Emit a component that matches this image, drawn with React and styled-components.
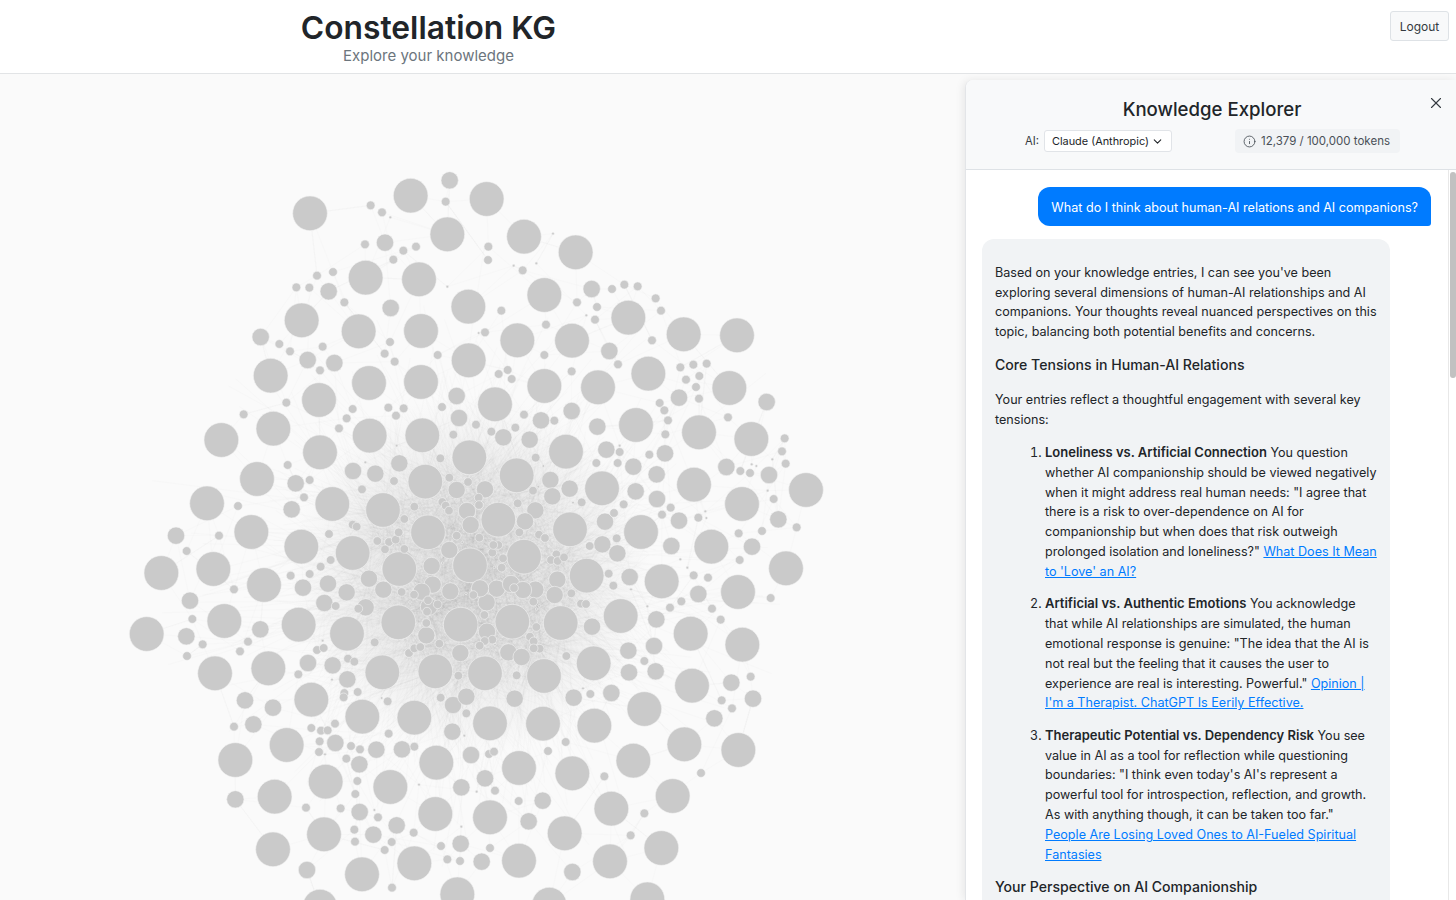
import React from "react";
import styled, { createGlobalStyle } from "styled-components";
import { ChevronDown, Info, X } from "lucide-react";

const GlobalStyle = createGlobalStyle`
  html, body {
    margin: 0;
    height: 100%;
    overflow: hidden;
  }
  body {
    font-family: Inter, "Liberation Sans", sans-serif;
    color: #212529;
    background: #fafafa;
  }
`;

// node positions, read off 3x crops of the graph: x, y pairs at 3x scale
const BIG = 52;
const MID = 26;
const SMALL = 13;
const TINY = 4;

const crops = [
  {
    ox: 120,
    oy: 160,
    [BIG]: [872,107,570,160,982,223,737,353,897,358,1045,440,545,481,716,514,903,513,1046,601,452,647,747,669,903,666,597,720,749,827,907,826,460,806,304,840,600,877,1048,892,411,957,916,965,637,1032,789,1050,261,1030,394,1116],
    [MID]: [989,61,795,248,626,394,812,444,422,531,563,600,643,609,1010,708,1017,774,838,910,699,933,766,941,1010,990,527,970,515,1048,1041,1053,1052,1095],
    [SMALL]: [977,125,752,136,786,157,735,253,850,272,888,260,820,299,591,347,639,336,529,382,568,383,673,427,478,552,510,574,608,560,600,631,810,546,794,581,824,605,953,585,499,728,371,763,698,747,680,775,657,805,805,743,851,745,828,767,966,741,1000,824,1068,794,961,895,503,915,569,960,552,1012,726,988,822,963,988,953,1044,966,354,1038,883,1040,853,1077,967,1026,977,1037,987,1052,698,1094,710,1100],
    [TINY]: [811,172,982,380,1076,519,736,907,830,857,826,865],
  },
  {
    ox: 480,
    oy: 160,
    [BIG]: [20,117,132,230,287,277,193,405,445,473,611,523,771,526,112,541,276,542,505,641,748,684,193,678,354,682,45,733,468,795,657,817,814,837,258,875,110,946,642,974,978,990,366,985,786,1032,55,1079,270,1108,483,1116],
    [MID]: [335,387,388,573,597,713,860,726,275,753,183,781,352,800,149,839,70,832,379,869,555,880,460,920,530,943,739,921,867,945,211,960,269,986,217,1009,467,994,531,1017,166,1051,135,1084,375,1085,597,1082,895,1078,15,988],
    [SMALL]: [25,260,24,300,128,331,396,387,433,374,473,379,527,415,543,452,291,427,351,441,345,479,64,452,15,517,198,494,516,541,193,585,275,634,414,613,601,622,640,614,680,611,618,659,658,648,648,681,657,716,539,729,553,751,564,781,556,823,56,642,83,630,95,657,132,764,223,782,106,803,34,815,744,772,914,835,906,874,917,911,508,884,419,876,413,909,349,909,167,893,781,933,810,939,881,1017,159,992,113,1030,305,1027,431,1033,402,1059,572,1043,546,1064,655,1073,950,1102],
    [TINY]: [219,221,101,317,169,310,319,466,419,857,877,898,815,913,829,918,863,992,190,918,187,924,175,980,279,1028,676,1054,679,1074],
  },
  {
    ox: 120,
    oy: 530,
    [BIG]: [544,50,698,69,924,7,280,117,124,129,432,165,838,117,1050,106,536,284,313,273,80,312,681,311,835,277,1022,284,285,430,445,415,787,427,946,424,574,509,727,560,883,563,500,645,346,690,949,698,617,755,811,771,464,800,946,852,612,913,459,958,883,1000,726,1033,1012,1093,600,1130],
    [MID]: [168,17,210,212,199,319,421,298,549,173,624,161,680,187,613,219,747,146,790,179,737,232,564,399,638,406,682,448,375,511,459,533,400,583,646,639,769,659,846,658,718,703,1053,675,1024,772,346,808,719,846,830,886,760,914,1022,941,561,1020,997,605,999,525,1039,500,935,108,938,164,991,184,919,316,1021,369,988,60,905,185,927,230],
    [SMALL]: [200,63,297,17,627,12,342,178,632,90,602,110,512,137,569,132,217,267,248,343,384,335,360,364,201,378,647,228,715,236,764,337,591,360,611,354,684,386,703,395,535,433,673,489,671,502,713,486,803,514,574,594,603,602,623,601,645,581,342,590,599,634,597,666,693,648,720,658,679,686,712,753,706,792,806,611,883,650,558,833,662,835,774,862,703,899,705,935,815,936,794,960,881,908,963,948,982,988,1020,993,816,1073,772,33,807,36,827,29,795,58,853,57,845,186,882,194,924,211,953,223,921,245,867,369,883,355,901,351,958,341,919,279,1015,437,962,503,1039,550,836,7,1010,17],
    [TINY]: [608,332,636,449,785,504,615,673,897,764,763,840,1024,890,1033,617,1070,785,870,216,968,99,1027,37,1038,190],
  },
  {
    ox: 480,
    oy: 530,
    [BIG]: [132,80,320,137,694,50,545,154,422,258,97,275,242,279,632,311,787,344,774,186,918,115,341,400,636,467,15,430,192,438,493,537,30,580,189,581,343,587,613,643,775,660,117,714,277,730,460,692,578,798,30,862,394,836,254,910,544,954,117,992,390,994,208,1124,502,1108],
    [MID]: [367,43,412,70,574,48,816,50,449,141,655,192,232,149,224,195,529,268,336,290,166,179,50,176,20,217,445,362,522,348,447,427,527,424,85,367,125,381,281,503,394,489,104,506,754,458,819,506,703,565,188,812,146,874,277,1026,15,745,5,995,0,175,93,162,129,180,21,305],
    [SMALL]: [177,14,195,24,118,7,329,48,410,25,776,10,846,3,779,90,386,131,400,167,274,190,641,136,684,143,604,214,570,233,696,236,722,269,872,204,303,221,318,222,169,291,150,320,161,334,179,356,259,378,110,436,331,492,493,393,812,440,725,511,756,535,257,636,204,663,27,672,42,665,373,739,663,729,45,782,116,813,493,850,452,916,30,954,229,73,213,90,233,93,252,82,160,215,13,255,37,329,14,333,69,85,65,113,37,68,55,45,40,45,102,174,83,160],
    [TINY]: [601,88,622,113,453,178,502,229,309,475,178,227,170,237,45,344],
  },
  {
    ox: 380,
    oy: 480,
    [SMALL]: [296,53,297,75,188,66,196,78,207,92,413,70,418,155,478,165,495,174,459,33,606,68,103,80,73,117,57,153,47,180,27,183,15,207,72,207,230,167,298,173,337,218,356,195,370,235,365,265,529,223,552,232,515,240,532,243,628,198,685,280,699,316,573,340,64,337,101,344,145,361,173,373,143,396,280,345,403,323,385,300,313,405,459,365,469,441,139,430,299,497,315,480,337,480,177,490,103,505,120,502,87,519,459,484,461,505,480,507,558,527,234,587,409,587,708,175,703,97,41,5,263,8],
    [TINY]: [247,187,188,248,343,262,257,340,475,380],
  },
];

const nodes = crops
  .flatMap((crop) =>
    [BIG, MID, SMALL, TINY].flatMap((size) => {
      const flat = crop[size] || [];
      const list = [];
      for (let i = 0; i < flat.length; i += 2) {
        list.push({
          x: crop.ox + flat[i] / 3,
          y: crop.oy + flat[i + 1] / 3,
          r: size / 3,
        });
      }
      return list;
    })
  )
  .filter(
    (n, i, all) =>
      !all.slice(0, i).some((o) => Math.hypot(o.x - n.x, o.y - n.y) < 3.5)
  );

// faint links: a dense web round the middle and a thin one further out
function makeLinks() {
  let seed = 42;
  const rand = () => {
    seed = (seed * 16807) % 2147483647;
    return seed / 2147483647;
  };
  const dist = (n) => Math.hypot(n.x - 470, n.y - 575);
  const inner = nodes.filter((n) => dist(n) < 110);
  const links = [];
  for (let i = 0; i < 3000; i++) {
    const a = inner[Math.floor(rand() * inner.length)];
    const angle = rand() * Math.PI * 2;
    const len = 30 + rand() * rand() * 230;
    links.push({
      x1: a.x,
      y1: a.y,
      x2: a.x + Math.cos(angle) * len,
      y2: a.y + Math.sin(angle) * len,
      o: 0.035,
    });
  }
  nodes.forEach((a) => {
    const near = nodes.filter((b) => {
      const d = Math.hypot(a.x - b.x, a.y - b.y);
      return d > 10 && d < 75;
    });
    for (let k = 0; k < 2 && near.length; k++) {
      const b = near[Math.floor(rand() * near.length)];
      links.push({ x1: a.x, y1: a.y, x2: b.x, y2: b.y, o: 0.03 });
    }
  });
  return links;
}

const links = makeLinks();

const Page = styled.div`
  height: 100vh;
  display: flex;
  flex-direction: column;
  overflow: hidden;
`;

const Header = styled.header`
  flex: none;
  height: 74px;
  box-sizing: border-box;
  display: flex;
  align-items: flex-start;
  background: #fff;
  border-bottom: 1px solid #e2e4e6;
`;

const Brand = styled.div`
  width: 857px;
  text-align: center;
  padding-top: 9px;
`;

const Title = styled.h1`
  margin: 0;
  font-size: 31.75px;
  line-height: 37px;
  font-weight: 600;
  color: #212529;
`;

const Subtitle = styled.div`
  font-size: 15px;
  line-height: 20px;
  color: #6c757d;
`;

const LogoutButton = styled.button`
  margin: 11px 7px 0 auto;
  width: 59px;
  height: 30px;
  padding: 0;
  font: 400 12px Inter, sans-serif;
  color: #343a40;
  background: #f8f9fa;
  border: 1px solid #dee2e6;
  border-radius: 3px;
`;

const Main = styled.main`
  flex: 1;
  min-height: 0;
  display: flex;
`;

const Canvas = styled.div`
  flex: 1;
  min-width: 0;
  overflow: hidden;
  background: #fafafa;
`;

const Graph = styled.svg`
  display: block;
`;

const Link = styled.line`
  stroke: #777;
  stroke-width: 0.5;
`;

const Node = styled.circle`
  fill: #cacaca;
  stroke: #f4f4f4;
  stroke-width: 0.6;
`;

const Panel = styled.aside`
  flex: none;
  width: 491px;
  margin-top: 6px;
  display: flex;
  flex-direction: column;
  min-height: 0;
  background: #fff;
  border-left: 1px solid #e3e5e8;
  border-top-left-radius: 8px;
  box-shadow: -2px 0 8px rgba(0, 0, 0, 0.08);
  box-sizing: border-box;
  overflow: hidden;
`;

const PanelHead = styled.div`
  position: relative;
  flex: none;
  height: 90px;
  box-sizing: border-box;
  padding-top: 16px;
  background: #f8f9fa;
  border-bottom: 1px solid #dee2e6;
`;

const PanelTitle = styled.h2`
  margin: 0;
  padding-left: 2px;
  text-align: center;
  font-size: 18.6px;
  line-height: 26px;
  font-weight: 500;
  color: #212529;
`;

const CloseButton = styled.button`
  position: absolute;
  top: 13px;
  right: 10px;
  width: 20px;
  height: 20px;
  padding: 0;
  display: flex;
  align-items: center;
  justify-content: center;
  border: 0;
  background: none;
  color: #343a40;
`;

const Controls = styled.div`
  display: flex;
  justify-content: center;
  align-items: center;
  margin-top: 7px;
  padding-left: 3px;
  gap: 63px;
`;

const Picker = styled.div`
  display: flex;
  align-items: center;
  gap: 5px;
  font-size: 11.2px;
  color: #343a40;
`;

const Select = styled.div`
  width: 128px;
  height: 22px;
  box-sizing: border-box;
  display: flex;
  align-items: center;
  justify-content: space-between;
  padding: 0 7px;
  background: #fff;
  border: 1px solid #e1e4e8;
  border-radius: 3px;
  font-size: 10.9px;
  color: #212529;
  white-space: nowrap;
`;

const Tokens = styled.div`
  height: 24px;
  width: 165px;
  box-sizing: border-box;
  display: flex;
  align-items: center;
  gap: 5px;
  padding: 0 8px;
  background: #f1f3f5;
  border-radius: 4px;
  font-size: 11.5px;
  color: #495057;
  white-space: nowrap;
`;

const ChatArea = styled.div`
  flex: 1;
  min-height: 0;
  display: flex;
`;

const Chat = styled.div`
  flex: 1;
  min-width: 0;
  overflow: hidden;
  background: #fff;
`;

const ScrollRail = styled.div`
  flex: none;
  width: 8px;
  box-sizing: border-box;
  padding: 2px 0 0 1px;
  border-left: 1px solid #e8e8e8;
`;

const ScrollThumb = styled.div`
  height: 206px;
  background: #c1c1c1;
  border-radius: 4px;
`;

const Thread = styled.div`
  padding: 17px 17px 0 16px;
  display: flex;
  flex-direction: column;
  gap: 13px;
  box-sizing: border-box;
  font-size: 12.6px;
  line-height: 19.8px;
`;

const UserBubble = styled.div`
  align-self: flex-end;
  padding: 11px 13px 8px;
  background: #007bff;
  color: #fff;
  border-radius: 12px 12px 3px 12px;
`;

const AnswerBubble = styled.div`
  width: 408px;
  box-sizing: border-box;
  padding: 13px;
  background: #f1f3f5;
  border-radius: 12px 12px 0 0;
  color: #212529;
`;

const Para = styled.p`
  margin: 11px 0 13.2px;
`;

const Heading = styled.h3`
  margin: 0 0 15.2px;
  font-size: 14.1px;
  line-height: 19.8px;
  font-weight: 500;
`;

const Steps = styled.ol`
  margin: 0 0 12px;
  padding-left: 50px;
`;

const Step = styled.li`
  margin-bottom: 12.8px;
`;

const Lead = styled.strong`
  font-size: 13px;
  font-weight: 600;
`;

const Source = styled.a`
  color: #007bff;
  text-decoration: underline;
`;

export default function App() {
  return (
    <Page>
      <GlobalStyle />
      <Header>
        <Brand>
          <Title>Constellation KG</Title>
          <Subtitle>Explore your knowledge</Subtitle>
        </Brand>
        <LogoutButton>Logout</LogoutButton>
      </Header>
      <Main>
        <Canvas>
          <Graph width="965" height="826" viewBox="0 74 965 826">
            <defs>
              <radialGradient id="haze">
                <stop offset="0" stopColor="#e4e4e4" />
                <stop offset="0.55" stopColor="#ececec" />
                <stop offset="1" stopColor="#fafafa" />
              </radialGradient>
            </defs>
            <circle cx="470" cy="575" r="180" fill="url(#haze)" />
            {links.map((l, i) => (
              <Link key={i} x1={l.x1} y1={l.y1} x2={l.x2} y2={l.y2} opacity={l.o} />
            ))}
            {nodes.map((n, i) => (
              <Node key={i} cx={n.x} cy={n.y} r={n.r} />
            ))}
          </Graph>
        </Canvas>
        <Panel>
          <PanelHead>
            <PanelTitle>Knowledge Explorer</PanelTitle>
            <CloseButton aria-label="Close">
              <X size={18} strokeWidth={1.5} />
            </CloseButton>
            <Controls>
              <Picker>
                AI:
                <Select>
                  Claude (Anthropic)
                  <ChevronDown size={13} strokeWidth={2} />
                </Select>
              </Picker>
              <Tokens>
                <Info size={13} strokeWidth={1.6} />
                12,379 / 100,000 tokens
              </Tokens>
            </Controls>
          </PanelHead>
          <ChatArea>
            <Chat>
              <Thread>
                <UserBubble>
                  What do I think about human-AI relations and AI companions?
                </UserBubble>
                <AnswerBubble>
                  <Para>
                    Based on your knowledge entries, I can see you've been exploring
                    several dimensions of human-AI relationships and AI companions.
                    Your thoughts reveal nuanced perspectives on this topic, balancing
                    both potential benefits and concerns.
                  </Para>
                  <Heading>Core Tensions in Human-AI Relations</Heading>
                  <Para>
                    Your entries reflect a thoughtful engagement with several key
                    tensions:
                  </Para>
                  <Steps>
                    <Step>
                      <Lead>Loneliness vs. Artificial Connection</Lead> You question
                      whether AI companionship should be viewed negatively when it
                      might address real human needs: "I agree that there is a risk to
                      over-dependence on AI for companionship but when does that risk
                      outweigh prolonged isolation and loneliness?"{" "}
                      <Source href="#">What Does It Mean to 'Love' an AI?</Source>
                    </Step>
                    <Step>
                      <Lead>Artificial vs. Authentic Emotions</Lead> You acknowledge
                      that while AI relationships are simulated, the human emotional
                      response is genuine: "The idea that the AI is not real but the
                      feeling that it causes the user to experience are real is
                      interesting. Powerful."{" "}
                      <Source href="#">
                        Opinion | I'm a Therapist. ChatGPT Is Eerily Effective.
                      </Source>
                    </Step>
                    <Step>
                      <Lead>Therapeutic Potential vs. Dependency Risk</Lead> You see
                      value in AI as a tool for reflection while questioning
                      boundaries: "I think even today's AI's represent a powerful tool
                      for introspection, reflection, and growth. As with anything
                      though, it can be taken too far."{" "}
                      <Source href="#">
                        People Are Losing Loved Ones to AI-Fueled Spiritual Fantasies
                      </Source>
                    </Step>
                  </Steps>
                  <Heading>Your Perspective on AI Companionship</Heading>
                </AnswerBubble>
              </Thread>
            </Chat>
            <ScrollRail>
              <ScrollThumb />
            </ScrollRail>
          </ChatArea>
        </Panel>
      </Main>
    </Page>
  );
}
